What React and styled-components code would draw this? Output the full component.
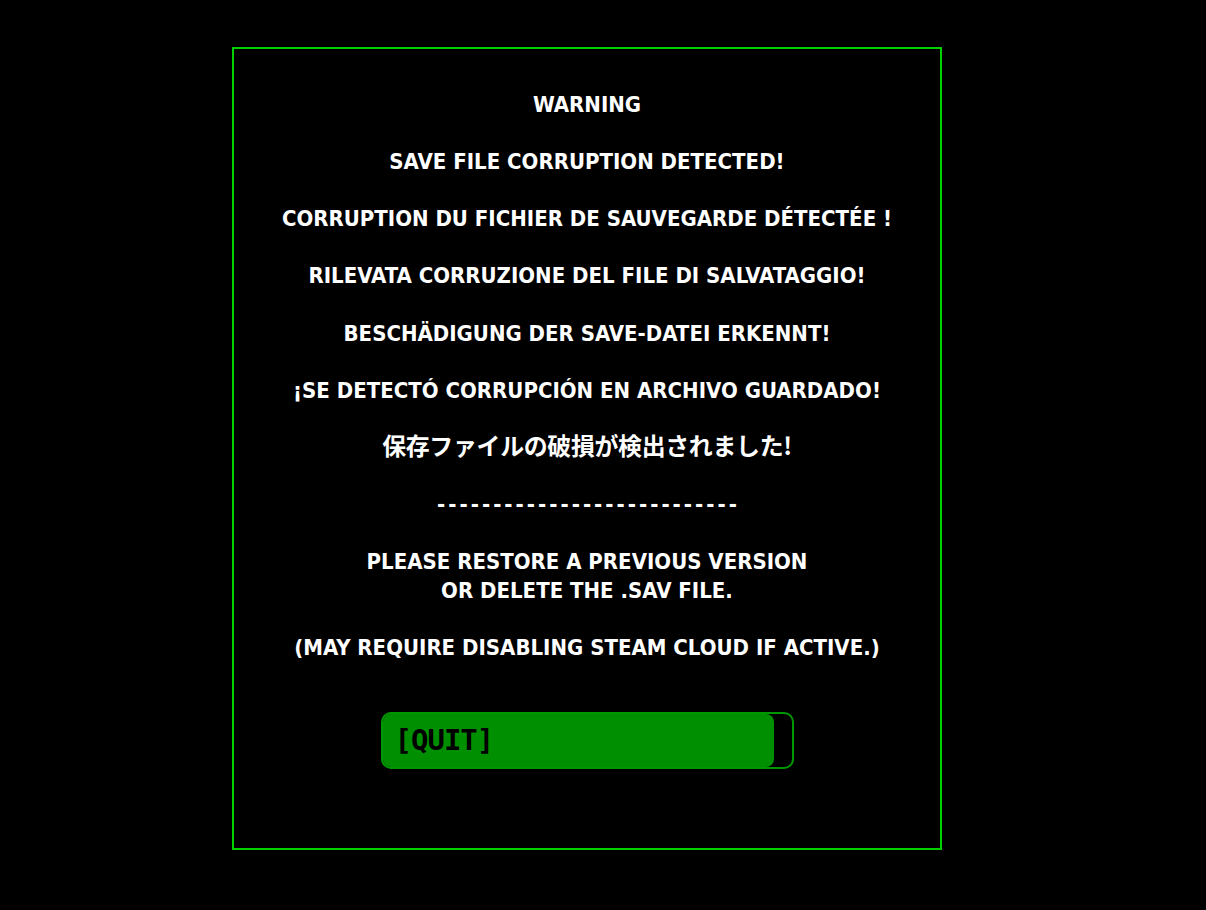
import styled, { createGlobalStyle } from "styled-components";

const GlobalStyle = createGlobalStyle`
  html, body {
    margin: 0;
    background: #000;
  }
`;

const Screen = styled.div`
  min-height: 910px;
  background: #000;
  padding: 47px 0 0 232px;
  box-sizing: border-box;
`;

const Panel = styled.div`
  width: 710px;
  height: 803px;
  box-sizing: border-box;
  border: 2px solid #00d000;
  display: flex;
  flex-direction: column;
  align-items: center;
  padding-top: 42px;
`;

const Message = styled.p`
  margin: 0;
  color: #fff;
  font-family: "DejaVu Sans Condensed", "DejaVu Sans", "Noto Sans CJK JP", sans-serif;
  font-weight: bold;
  font-size: 22px;
  line-height: 28.58px;
  text-align: center;
  text-transform: uppercase;
`;

const Japanese = styled.span`
  font-family: "Noto Sans CJK JP", sans-serif;
  font-size: 23.9px;
  line-height: 18px;
  letter-spacing: -0.3px;
`;

const Rule = styled.span`
  letter-spacing: 3px;
  margin-right: -3px;
`;

const QuitButton = styled.button`
  margin-top: 49px;
  width: 413px;
  height: 57px;
  box-sizing: border-box;
  border: 2px solid #009800;
  border-radius: 10px;
  background: #000;
  padding: 0 18px 0 0;
  display: flex;
  cursor: pointer;
`;

const Fill = styled.span`
  flex: 1;
  display: flex;
  align-items: center;
  background: #008f00;
  border-radius: 8px;
  padding-left: 12px;
  color: #000;
  font-family: "DejaVu Sans Mono", monospace;
  font-weight: bold;
  font-size: 29px;
  letter-spacing: -1px;
`;

export default function App() {
  return (
    <>
      <GlobalStyle />
      <Screen>
        <Panel>
          <Message>
            Warning
            <br />
            <br />
            Save file corruption detected!
            <br />
            <br />
            Corruption du fichier de sauvegarde détectée !
            <br />
            <br />
            Rilevata corruzione del file di salvataggio!
            <br />
            <br />
            Beschädigung der Save-Datei erkennt!
            <br />
            <br />
            ¡Se detectó corrupción en archivo guardado!
            <br />
            <br />
            <Japanese>保存ファイルの破損が検出されました!</Japanese>
            <br />
            <br />
            <Rule>---------------------------</Rule>
            <br />
            <br />
            Please restore a previous version
            <br />
            or delete the .sav file.
            <br />
            <br />
            (May require disabling Steam Cloud if active.)
          </Message>
          <QuitButton>
            <Fill>[QUIT]</Fill>
          </QuitButton>
        </Panel>
      </Screen>
    </>
  );
}
